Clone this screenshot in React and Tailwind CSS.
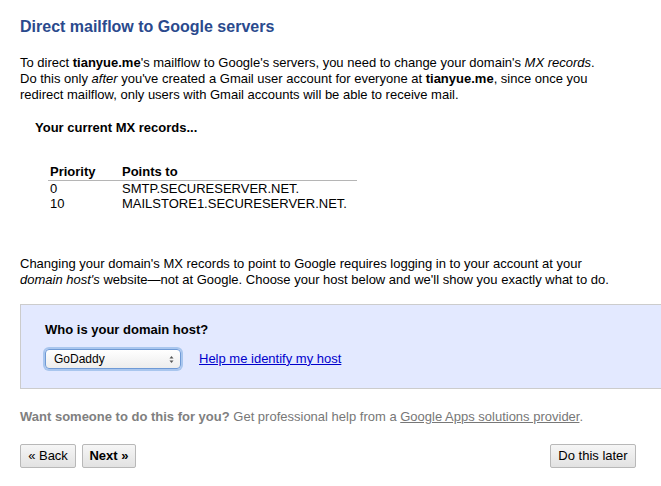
export default function App() {
  return (
    <div className="min-h-screen bg-white overflow-hidden font-['Liberation_Sans',Arial,sans-serif] text-[13px] leading-[16px] text-black">
      <div className="pl-5 pt-[17px]">
        <h1 className="text-[16px] leading-[20px] font-bold text-[#2a4a8d]">
          Direct mailflow to Google servers
        </h1>

        <p className="mt-[18px] pr-5">
          To direct <b>tianyue.me</b>'s mailflow to Google's servers, you need to change your domain's{" "}
          <i>MX records</i>.
          <br />
          Do this only <i>after</i> you've created a Gmail user account for everyone at <b>tianyue.me</b>,
          since once you
          <br />
          redirect mailflow, only users with Gmail accounts will be able to receive mail.
        </p>

        <div className="mt-[17px] ml-[15px] font-bold">Your current MX records...</div>

        {/* MX table */}
        <table className="mt-[28px] ml-[28px] w-[309px] border-collapse">
          <thead>
            <tr className="border-b border-[#b5b5b5]">
              <th className="w-[74px] pl-[2px] text-left font-bold h-[16px] leading-[15px] align-top">Priority</th>
              <th className="text-left font-bold h-[16px] leading-[15px] align-top">Points to</th>
            </tr>
          </thead>
          <tbody>
            <tr>
              <td className="pl-[2px] leading-[15px]">0</td>
              <td className="leading-[15px]">SMTP.SECURESERVER.NET.</td>
            </tr>
            <tr>
              <td className="pl-[2px] leading-[15px]">10</td>
              <td className="leading-[15px]">MAILSTORE1.SECURESERVER.NET.</td>
            </tr>
          </tbody>
        </table>

        <p className="mt-[45px] pr-5">
          Changing your domain's MX records to point to Google requires logging in to your account at your
          <br />
          <i>domain host's</i> website—not at Google. Choose your host below and we'll show you exactly what to do.
        </p>

        {/* host box */}
        <div className="mt-[16px] border border-r-0 border-[#cccccc] bg-[#e3e9ff] pl-[24px] pt-[17px] pb-[19px]">
          <div className="font-bold">Who is your domain host?</div>
          <div className="mt-[11px] flex items-center gap-[18px]">
            <div className="relative flex h-[20px] w-[136px] items-center rounded-[4px] border border-[#6f9ad6] bg-gradient-to-b from-white to-[#ededed] pl-[8px] text-[12px] shadow-[0_0_0_2px_#a9c6ee]">
              GoDaddy
              <svg className="absolute right-[6px] top-[5px]" width="5" height="9" viewBox="0 0 5 9">
                <path d="M0.5 3.5 L2.5 1 L4.5 3.5 Z" fill="#555" />
                <path d="M0.5 5.5 L2.5 8 L4.5 5.5 Z" fill="#555" />
              </svg>
            </div>
            <a href="#" className="text-[#0000cc] underline">
              Help me identify my host
            </a>
          </div>
        </div>

        <p className="mt-[20px] text-[#777777]">
          <b className="text-[#808080]">Want someone to do this for you?</b> Get professional help from a{" "}
          <a href="#" className="underline text-[#777777]">Google Apps solutions provider</a>.
        </p>

        <div className="mt-[19px] flex items-center pr-[25px]">
          <button className="h-[24px] w-[56px] rounded-[2px] border border-[#b8b8b8] bg-gradient-to-b from-[#f6f6f6] to-[#e2e2e2] text-[13px]">
            « Back
          </button>
          <button className="ml-[6px] h-[24px] w-[54px] rounded-[2px] border border-[#b8b8b8] bg-gradient-to-b from-[#f6f6f6] to-[#e2e2e2] text-[13px] font-bold">
            Next »
          </button>
          <button className="ml-auto h-[24px] w-[86px] rounded-[2px] border border-[#b8b8b8] bg-gradient-to-b from-[#f6f6f6] to-[#e2e2e2] text-[13px]">
            Do this later
          </button>
        </div>
      </div>
    </div>
  );
}
